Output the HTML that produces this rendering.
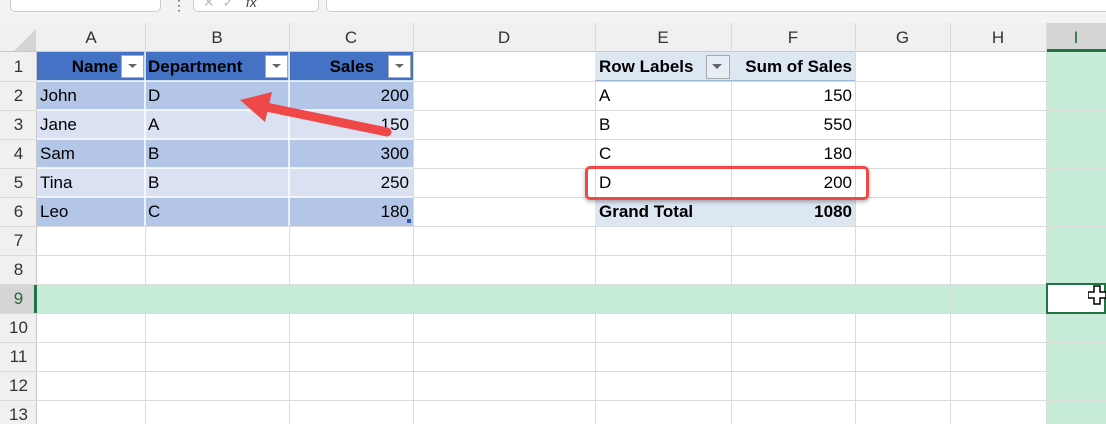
<!DOCTYPE html><html><head><style>
body{margin:0;width:1106px;height:424px;overflow:hidden;background:#fff;font-family:"Liberation Sans",sans-serif;position:relative}
.a{position:absolute;box-sizing:border-box}
.t{font-size:17px;color:#000;line-height:29px;white-space:nowrap}
</style></head><body>
<div class="a" style="left:0;top:0;width:1106px;height:23px;background:#f3f3f3"></div>
<div class="a" style="left:10px;top:-8px;width:151px;height:20px;background:#fff;border:1px solid #ccc;border-radius:5px"></div>
<div class="a" style="left:172px;top:-3px;font-size:14px;color:#555">⋮</div>
<div class="a" style="left:193px;top:-8px;width:126px;height:20px;background:#fff;border:1px solid #ccc;border-radius:5px"></div>
<div class="a" style="left:203px;top:-6px;font-size:14px;color:#bbb">✕ &nbsp;✓ &nbsp;&nbsp;<i style="color:#444">fx</i></div>
<div class="a" style="left:326px;top:-8px;width:800px;height:20px;background:#fff;border:1px solid #ccc;border-radius:5px"></div>
<div class="a" style="left:0;top:23px;width:1106px;height:29px;background:#f0f0f0;border-bottom:1px solid #c8c8c8"></div>
<div class="a" style="left:14px;top:29px;width:0;height:0;border-left:22px solid transparent;border-bottom:22px solid #d4d4d4"></div>
<div class="a" style="left:0;top:52px;width:37px;height:372px;background:#f0f0f0;border-right:1px solid #c8c8c8"></div>
<div class="a" style="left:37px;top:284px;width:1069px;height:29px;background:#c6ebd7"></div>
<div class="a" style="left:1046px;top:52px;width:60px;height:372px;background:#c6ebd7"></div>
<div class="a" style="left:1046px;top:23px;width:60px;height:29px;background:#d5d5d5;border-bottom:3px solid #217346"></div>
<div class="a" style="left:0;top:284px;width:37px;height:29px;background:#d5d5d5;border-right:3px solid #217346"></div>
<svg class="a" style="left:0;top:0" width="1106" height="424">
<g stroke="#dadada" stroke-width="1">
<line x1="145.5" y1="23" x2="145.5" y2="424"/><line x1="289.5" y1="23" x2="289.5" y2="424"/><line x1="413.5" y1="23" x2="413.5" y2="424"/><line x1="595.5" y1="23" x2="595.5" y2="424"/><line x1="731.5" y1="23" x2="731.5" y2="424"/><line x1="855.5" y1="23" x2="855.5" y2="424"/><line x1="950.5" y1="23" x2="950.5" y2="424"/><line x1="1046.5" y1="23" x2="1046.5" y2="424"/>
<line x1="0" y1="81.5" x2="1106" y2="81.5"/><line x1="0" y1="110.5" x2="1106" y2="110.5"/><line x1="0" y1="139.5" x2="1106" y2="139.5"/><line x1="0" y1="168.5" x2="1106" y2="168.5"/><line x1="0" y1="197.5" x2="1106" y2="197.5"/><line x1="0" y1="226.5" x2="1106" y2="226.5"/><line x1="0" y1="255.5" x2="1106" y2="255.5"/><line x1="0" y1="284.5" x2="1106" y2="284.5"/><line x1="0" y1="313.5" x2="1106" y2="313.5"/><line x1="0" y1="342.5" x2="1106" y2="342.5"/><line x1="0" y1="371.5" x2="1106" y2="371.5"/><line x1="0" y1="400.5" x2="1106" y2="400.5"/>
</g></svg>
<!-- table -->
<div class="a" style="left:37px;top:52px;width:376px;height:29px;background:#4472c4"></div>
<div class="a" style="left:37px;top:81px;width:376px;height:29px;background:#b4c6e7"></div>
<div class="a" style="left:37px;top:110px;width:376px;height:29px;background:#d9e1f2"></div>
<div class="a" style="left:37px;top:139px;width:376px;height:29px;background:#b4c6e7"></div>
<div class="a" style="left:37px;top:168px;width:376px;height:29px;background:#d9e1f2"></div>
<div class="a" style="left:37px;top:197px;width:376px;height:29px;background:#b4c6e7"></div>
<svg class="a" style="left:0;top:0" width="420" height="230"><g stroke="#fff" stroke-width="1.5"><line x1="145" y1="52" x2="145" y2="226"/><line x1="289" y1="52" x2="289" y2="226"/><line x1="37" y1="81" x2="413" y2="81"/><line x1="37" y1="110" x2="413" y2="110"/><line x1="37" y1="139" x2="413" y2="139"/><line x1="37" y1="168" x2="413" y2="168"/><line x1="37" y1="197" x2="413" y2="197"/></g>
<g fill="#fff" stroke="#aaa"><rect x="121.5" y="55.5" width="22" height="22"/><rect x="265.5" y="55.5" width="22" height="22"/><rect x="388.5" y="55.5" width="22" height="22"/></g>
<g fill="#666"><path d="M128 64h9l-4.5 4z"/><path d="M272 64h9l-4.5 4z"/><path d="M395 64h9l-4.5 4z"/></g>
<rect x="407" y="219" width="4" height="4" fill="#3355aa"/></svg>
<div class="a t" style="left:0;top:23px;width:1106px;height:29px;color:#333">
<span class="a" style="left:37px;width:108px;text-align:center">A</span><span class="a" style="left:145px;width:144px;text-align:center">B</span><span class="a" style="left:289px;width:124px;text-align:center">C</span><span class="a" style="left:413px;width:182px;text-align:center">D</span><span class="a" style="left:595px;width:136px;text-align:center">E</span><span class="a" style="left:731px;width:124px;text-align:center">F</span><span class="a" style="left:855px;width:95px;text-align:center">G</span><span class="a" style="left:950px;width:96px;text-align:center">H</span><span class="a" style="left:1046px;width:60px;text-align:center;color:#1e6b3c">I</span></div>
<div class="a t" style="left:0;top:52px;width:37px;color:#333;text-align:center">1<br>2<br>3<br>4<br>5<br>6<br>7<br>8<br><span style="color:#1e6b3c">9</span><br>10<br>11<br>12<br>13</div>
<div class="a t" style="left:37px;top:52px;width:81px;text-align:right;font-weight:bold">Name</div>
<div class="a t" style="left:148px;top:52px;font-weight:bold;width:117px;overflow:hidden">Department</div>
<div class="a t" style="left:289px;top:52px;width:85px;text-align:right;font-weight:bold">Sales</div>
<div class="a t" style="left:40px;top:81px">John<br>Jane<br>Sam<br>Tina<br>Leo</div>
<div class="a t" style="left:148px;top:81px">D<br>A<br>B<br>B<br>C</div>
<div class="a t" style="left:289px;top:81px;width:120px;text-align:right">200<br>150<br>300<br>250<br>180</div>
<!-- pivot -->
<div class="a" style="left:595px;top:52px;width:260px;height:29px;background:#dde7f2;border-bottom:1px solid #9bb7dc"></div>
<div class="a" style="left:595px;top:197px;width:260px;height:29px;background:#dde7f2"></div>
<div class="a" style="left:706px;top:55px;width:24px;height:24px;border:1px solid #aaa;background:#e8eef6"></div>
<svg class="a" style="left:712px;top:64px" width="12" height="6"><path d="M0 0h10l-5 5z" fill="#666"/></svg>
<div class="a t" style="left:599px;top:52px;font-weight:bold">Row Labels</div>
<div class="a t" style="left:731px;top:52px;width:121px;text-align:right;font-weight:bold">Sum of Sales</div>
<div class="a t" style="left:599px;top:81px">A<br>B<br>C<br>D<br><b>Grand Total</b></div>
<div class="a t" style="left:731px;top:81px;width:121px;text-align:right">150<br>550<br>180<br>200<br><b>1080</b></div>
<div class="a" style="left:585px;top:166px;width:284px;height:34px;border:3px solid #f04848;border-radius:5px;box-shadow:0 2px 4px rgba(0,0,0,.3)"></div>
<div class="a" style="left:1046px;top:283px;width:60px;height:31px;border:2px solid #217346;background:#fff"></div>
<svg class="a" style="left:1088px;top:285px" width="18" height="22"><path d="M6 1h6v6h6v6h-6v6h-6v-6h-6v-6h6z" fill="#fff" stroke="#000" stroke-width="1.5"/></svg>
<svg class="a" style="left:0;top:0" width="420" height="160"><path d="M387 132 L266 107" stroke="#f04848" stroke-width="9" stroke-linecap="round" fill="none"/><path d="M240 100 L272 92 L265 122 Z" fill="#f04848"/></svg>
</body></html>
